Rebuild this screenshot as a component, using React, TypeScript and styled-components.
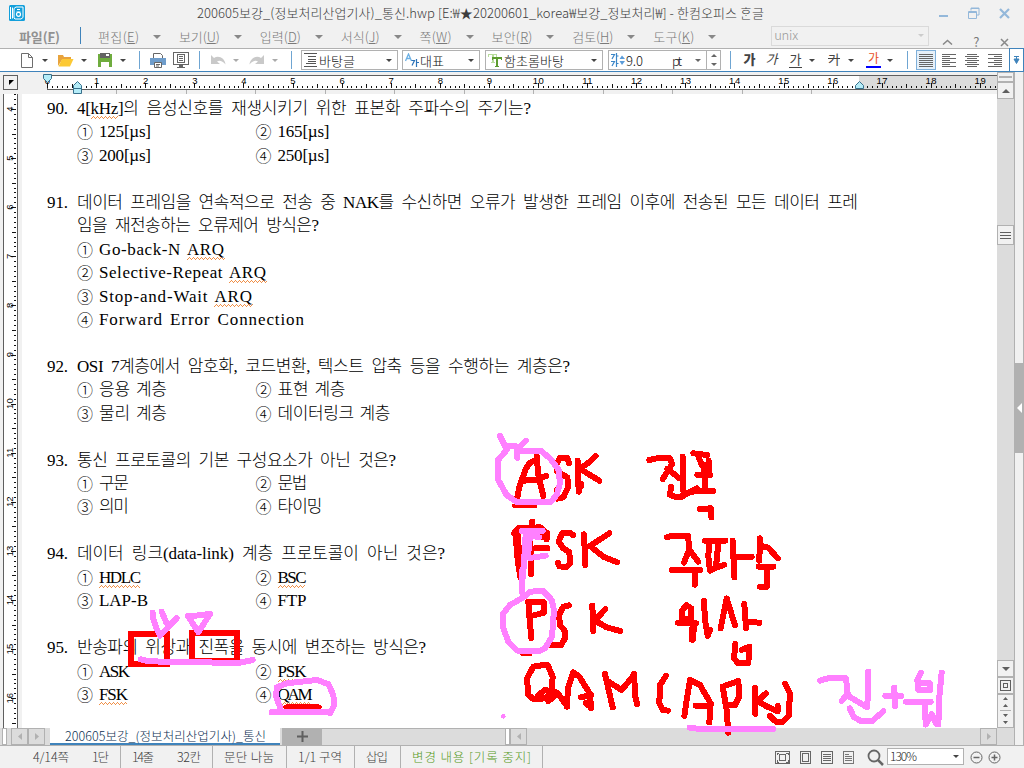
import React, { useLayoutEffect, useRef, useState } from "react";
import styled, { createGlobalStyle, css } from "styled-components";

const DARK = "#5f5f5f";
const LINE = "#b1b1b1";
const TRACK = "#dcdcdc";
const PANEL = "#f1f1f1";
const BLUE = "#3f83bb";
const RED = "#ff0000";
const PINK = "#ff80ff";

const UI_FONT = `"Noto Sans CJK KR", "Liberation Sans", sans-serif`;
const DOC_FONT = `"Liberation Serif", "Noto Sans CJK KR", serif`;

const GlobalStyle = createGlobalStyle`
  * { box-sizing: border-box; }
  body { margin: 0; background: ${PANEL}; overflow: hidden; }
  svg { display: block; flex: none; }
`;

const Window = styled.div`
  position: relative;
  display: flex;
  flex-direction: column;
  width: 1024px;
  height: 768px;
  overflow: hidden;
  background: ${PANEL};
  font-family: ${UI_FONT};
  font-weight: 300;
  font-size: 13px;
  color: #3c3c3c;
`;

const FitBox = styled.span<{ $w: number }>`
  display: block;
  flex: none;
  width: ${(p) => p.$w}px;
  white-space: pre;
`;

/* Tracks its text out or in so that it takes exactly the given width. */
function Fit({ w, children }: { w: number; children: React.ReactNode }) {
  const ref = useRef<HTMLSpanElement>(null);
  const [spacing, setSpacing] = useState(0);
  useLayoutEffect(() => {
    const el = ref.current;
    if (!el) return;
    const count = Math.max(1, (el.textContent || "").length - 1);
    setSpacing((w - el.getBoundingClientRect().width) / count);
  }, [w]);
  return (
    <FitBox $w={w}>
      <span ref={ref} style={{ letterSpacing: spacing }}>{children}</span>
    </FitBox>
  );
}

/* ---------- title and menu ---------- */

const TitleBar = styled.header`
  display: flex;
  align-items: center;
  height: 26px;
  padding-left: 9px;
  line-height: 26px;
  font-size: 13px;
`;

const TitleText = styled.div`
  margin-left: 172px;
  margin-right: 175px;
`;

const WindowButtons = styled.div`
  display: flex;
  align-items: center;
  gap: 19px;
`;

const MenuBar = styled.nav`
  display: flex;
  height: 22px;
  padding-left: 19px;
  line-height: 22px;
  color: #7a7a7a;
`;

const MenuItem = styled.div<{ $strong?: boolean }>`
  display: flex;
  align-items: center;
  margin-right: 17.9px;
  ${(p) => p.$strong && css`font-weight: 700; color: #919191; margin-right: 18px;`}
`;

const MenuDivider = styled.div`
  width: 1px;
  height: 17px;
  margin: 1px 17px 0 2px;
  background: ${BLUE};
`;

const Caret = styled.i<{ $size?: number; $color?: string; $ml?: number; $up?: boolean }>`
  flex: none;
  width: 0;
  height: 0;
  margin-left: ${(p) => p.$ml ?? 0}px;
  border: solid transparent;
  border-width: 0 ${(p) => p.$size ?? 3}px;
  ${(p) => (p.$up ? "border-bottom" : "border-top")}: ${(p) => p.$size ?? 3}px solid ${(p) => p.$color ?? "#444"};
`;

const SearchBox = styled.div`
  display: flex;
  align-items: center;
  justify-content: space-between;
  width: 158px;
  height: 20px;
  margin-left: 37px;
  padding: 0 4px 2px 2px;
  border: 1px solid #dadada;
  color: #999;
`;

const MenuTools = styled.div`
  display: flex;
  align-items: center;
  gap: 20px;
  margin: 9px 0 0 13px;
  height: 14px;
`;

/* ---------- toolbar ---------- */

const Toolbar = styled.div`
  display: flex;
  align-items: center;
  height: 24px;
  border-top: 1px solid ${LINE};
  border-bottom: 1px solid ${BLUE};
  background: #fff;
`;

const Item = styled.div<{ $ml: number; $w: number }>`
  flex: none;
  width: ${(p) => p.$w}px;
  margin-left: ${(p) => p.$ml}px;
`;

const Divider = styled.div<{ $ml: number }>`
  flex: none;
  width: 1px;
  height: 18px;
  margin-left: ${(p) => p.$ml}px;
  background: #6fa5d2;
`;

const Combo = styled.div<{ $ml: number; $w: number }>`
  display: flex;
  flex: none;
  align-items: center;
  width: ${(p) => p.$w}px;
  height: 20px;
  margin-left: ${(p) => p.$ml}px;
  padding: 0 5px 0 2px;
  border: 1px solid ${LINE};
  background: #fff;
  color: #111;
  font-size: 13px;
  line-height: 17px;
`;

const Grow = styled.div`
  flex: 1;
`;

const Spinner = styled.div`
  display: flex;
  flex: none;
  flex-direction: column;
  align-items: center;
  justify-content: center;
  gap: 6px;
  width: 15px;
  height: 20px;
  margin-left: -1px;
  border: 1px solid ${LINE};
`;

const Glyph = styled.div<{ $ml: number; $w: number; $kind?: "bold" | "italic" | "under" | "strike" | "color" }>`
  flex: none;
  width: ${(p) => p.$w}px;
  height: 16px;
  margin-left: ${(p) => p.$ml}px;
  text-align: center;
  font-size: 13px;
  line-height: 14px;
  font-weight: 400;
  color: #444;
  ${(p) => p.$kind === "bold" && css`font-weight: 900;`}
  ${(p) => p.$kind === "italic" && css`font-style: italic;`}
  ${(p) => p.$kind === "under" && css`border-bottom: 1px solid #444;`}
  ${(p) => p.$kind === "strike" && css`text-decoration: line-through;`}
  ${(p) => p.$kind === "color" && css`color: #e8501e; font-size: 12px; line-height: 11px; border-bottom: 2px solid #0000ff;`}
`;

const AlignButton = styled.div<{ $ml: number; $w: number; $on?: boolean }>`
  display: flex;
  flex: none;
  align-items: center;
  justify-content: center;
  width: ${(p) => p.$w}px;
  height: 20px;
  margin-left: ${(p) => p.$ml}px;
  ${(p) => p.$on && css`border: 1px solid #7fb0da; background: #e6f0f9;`}
`;

const MoreButton = styled.div`
  display: flex;
  align-items: center;
  justify-content: center;
  width: 15px;
  height: 24px;
  margin-left: 7px;
  border: 1px solid ${BLUE};
  background: #fff;
`;

/* ---------- body ---------- */

const Body = styled.div`
  display: flex;
  height: 674px;
  border-bottom: 1px solid ${LINE};
`;

const Work = styled.div`
  display: flex;
  flex-direction: column;
  width: 1014px;
`;

const Upper = styled.div`
  display: flex;
  height: 656px;
`;

const Editor = styled.div`
  display: flex;
  flex-direction: column;
  width: 997px;
`;

const RulerRow = styled.div`
  display: flex;
  height: 22px;
  padding-left: 3px;
`;

const RulerCorner = styled.div`
  display: flex;
  align-items: flex-end;
  justify-content: flex-end;
  width: 15px;
  height: 15px;
  margin-top: 3px;
  padding: 0 3px 4px 0;
  border: 1px solid ${DARK};
`;

const PageRow = styled.div`
  display: flex;
  height: 634px;
`;

const Page = styled.main`
  flex: 1;
  padding: 3px 0 0 25px;
  background: #fff;
  color: #000;
  font-family: ${DOC_FONT};
  font-size: 17px;
  font-weight: 300;
  line-height: 23.44px;
`;

const Line = styled.div`
  display: flex;
  height: 23.44px;
  overflow: visible;
`;

const Num = styled.div`
  width: 30px;
  word-spacing: 0;
`;

const Question = styled.div`
  word-spacing: 4px;
`;

const Option = styled.div<{ $first?: boolean }>`
  display: flex;
  width: 178.5px;
  margin-left: ${(p) => (p.$first ? 30 : 0)}px;
  white-space: nowrap;
  word-spacing: 2px;
`;

const Mark = styled.span`
  flex: none;
  width: 22px;
  font-family: "Noto Sans CJK KR", sans-serif;
  font-size: 16px;
`;

const Spell = styled.span`
  padding-bottom: 1px;
  background:
    repeating-linear-gradient(90deg, #f09048 0 1px, transparent 1px 4px) 0 100% / 100% 1px no-repeat,
    repeating-linear-gradient(90deg, transparent 0 1px, #f09048 1px 2px, transparent 2px 3px, #f09048 3px 4px) 0 calc(100% - 1px) / 100% 1px no-repeat,
    repeating-linear-gradient(90deg, transparent 0 2px, #f09048 2px 3px, transparent 3px 4px) 0 calc(100% - 2px) / 100% 1px no-repeat;
`;

/* ---------- scrollbars ---------- */

const ScrollColumn = styled.div`
  display: flex;
  flex-direction: column;
  width: 17px;
  background: ${TRACK};
`;

const ScrollButton = styled.div<{ $h: number; $w?: number; $mt?: number; $flat?: boolean }>`
  display: flex;
  flex: none;
  flex-direction: column;
  align-items: center;
  justify-content: center;
  width: ${(p) => p.$w ?? 17}px;
  height: ${(p) => p.$h}px;
  margin-top: ${(p) => p.$mt ?? 0}px;
  border: 1px solid ${LINE};
  background: ${(p) => (p.$flat ? TRACK : PANEL)};
`;

const Side = styled.aside`
  width: 10px;
  padding-top: 291px;
  border-left: 1px solid ${LINE};
  border-right: 1px solid ${LINE};
`;

const SideHandle = styled.div`
  display: flex;
  align-items: center;
  justify-content: center;
  width: 10px;
  height: 90px;
  margin-left: -1px;
  background: ${LINE};
`;

const TabBar = styled.div`
  display: flex;
  height: 17px;
  background: ${TRACK};
`;

const Grip = styled.div<{ $ml: number }>`
  flex: none;
  width: 5px;
  margin-left: ${(p) => p.$ml}px;
  border: 1px solid ${LINE};
  background: #fff;
`;

const Tab = styled.div`
  display: flex;
  align-items: center;
  width: 230px;
  height: 17px;
  margin-left: 5px;
  padding-left: 15px;
  border-bottom: 2px solid ${BLUE};
  background: #fff;
  color: #0c2f52;
  font-size: 12.5px;
  line-height: 14px;
`;

const AddTab = styled.div`
  display: flex;
  align-items: center;
  justify-content: center;
  width: 40px;
  margin-left: 2px;
  background: ${LINE};
`;

const TabTrack = styled.div`
  width: 183px;
  border-top: 1px solid ${LINE};
`;

/* ---------- status bar ---------- */

const StatusBar = styled.footer`
  display: flex;
  align-items: center;
  height: 22px;
  padding-left: 33px;
  line-height: 22px;
  font-size: 12.5px;
`;

const Status = styled.div<{ $mr: number; $rule?: boolean; $green?: boolean }>`
  height: 22px;
  padding-right: ${(p) => p.$mr}px;
  ${(p) => p.$rule && css`border-right: 1px solid ${LINE}; margin-right: 11px;`}
  ${(p) => p.$green && css`color: #589a1e;`}
`;

const ViewIcons = styled.div`
  display: flex;
  align-items: center;
  gap: 10px;
  margin-left: 221px;
`;

const ZoomBox = styled.div`
  display: flex;
  align-items: center;
  justify-content: space-between;
  width: 77px;
  height: 17px;
  margin: 0 6px 1px 3px;
  padding: 0 4px 1px 2px;
  border: 1px solid ${LINE};
  background: #fff;
  color: #222;
  font-size: 12px;
  line-height: 14px;
`;

const Ink = styled.svg`
  position: absolute;
  inset: 0;
  pointer-events: none;
`;

/* ---------- rulers ---------- */

const UNIT = 49.1;

function HorizontalRuler() {
  const ticks = Array.from({ length: 194 }, (_, i) => i);
  const nums = Array.from({ length: 20 }, (_, i) => i);
  const marks = Array.from({ length: 13 }, (_, i) => 116.5 + i * 69.5);
  return (
    <svg width="979" height="22" viewBox="18 72 979 22" shapeRendering="crispEdges">
      <rect x="47" y="75" width="812" height="14" fill="#fff" />
      <rect x="859" y="75" width="138" height="14" fill={TRACK} />
      <path d="M47 75.5H997M47 89.5H997M47.5 75V90" stroke={DARK} fill="none" />
      {ticks.map((i) => {
        const x = Math.round(47 + (i * UNIT) / 10);
        const h = i % 10 === 0 ? 5 : i % 5 === 0 ? 4 : 2;
        return <rect key={i} x={x} y={88 - h} width="1" height={h} fill="#111" />;
      })}
      {nums.map((n) => (
        <text key={n} x={47.5 + n * UNIT} y="84" textAnchor="middle" fontFamily="Liberation Sans, sans-serif" fontSize="9.5" letterSpacing={n > 9 ? 0.5 : 0} fill="#000">{n}</text>
      ))}
      {marks.filter((m) => m < 859).map((m) => <path key={m} d={`M${m} 90V94`} stroke={LINE} />)}
      <path d="M43.5 74.5h8v4l-4 4-4-4z" fill="#b4ecf8" stroke="#38708c" shapeRendering="auto" />
      <path d="M77.500 81.500l4 4v3h-8v-3zM73.500 88.500h8v5h-8z" fill="#b4ecf8" stroke="#38708c" shapeRendering="auto" />
      <path d="M859.500 81.500l4 4v3h-8v-3z" fill="#b4ecf8" stroke="#38708c" shapeRendering="auto" />
    </svg>
  );
}

function VerticalRuler() {
  const nums = Array.from({ length: 13 }, (_, i) => i + 4);
  const ticks = Array.from({ length: 129 }, (_, i) => i + 37);
  const at = (v: number) => 109 + (v - 4) * UNIT;
  return (
    <svg width="22" height="634" viewBox="0 94 22 634" shapeRendering="crispEdges">
      <rect x="3" y="94" width="15" height="634" fill="#fff" />
      <path d="M3.500 94V728M17.500 94V728" stroke={DARK} />
      {ticks.map((i) => {
        const w = i % 10 === 0 ? 5 : i % 5 === 0 ? 4 : 2;
        return <rect key={i} x={16 - w} y={Math.round(at(i / 10))} width={w} height="1" fill="#111" />;
      })}
      {nums.map((n) => (
        <text key={n} transform={`translate(13 ${at(n)}) rotate(-90)`} textAnchor="middle" fontFamily="Liberation Sans, sans-serif" fontSize="9.5" fill="#000">{n}</text>
      ))}
    </svg>
  );
}

/* ---------- icons ---------- */

const Logo = () => (
  <svg width="16" height="16" viewBox="0 0 16 16">
    <rect width="16" height="16" rx="1.500" fill="#129fdb" />
    <path d="M1.500 2v12M3.500 2.500v11" stroke="#fff" />
    <path d="M5 3.500L7 2h7v10.500L12 14H6l-1-1z" fill="none" stroke="#fff" />
    <path d="M8 4.500h3M7.500 7h4" stroke="#fff" />
    <circle cx="9.500" cy="9.300" r="2" fill="none" stroke="#fff" strokeWidth="1.200" />
  </svg>
);

const NewIcon = () => (
  <svg width="12" height="15" viewBox="0 0 12 15">
    <path d="M.5.500h7l4 4v10h-11zM7.500.500v4h4" fill="#fff" stroke="#6e6e6e" />
  </svg>
);

const FolderIcon = () => (
  <svg width="17" height="13" viewBox="0 0 17 13">
    <path d="M1 12V1h5l1 2h7v3H5z" fill="#e8a33c" />
    <path d="M5 5h11.500L13 12.500H1.500z" fill="#fcc934" />
  </svg>
);

const SaveIcon = () => (
  <svg width="14" height="15" viewBox="0 0 14 15" shapeRendering="crispEdges">
    <path d="M0 1h14v13H0z" fill="#6fac3e" />
    <path d="M2 0h10v5H2z" fill="#646464" />
    <path d="M8 1h3v2H8zM3 9h8v5H3z" fill="#fff" />
  </svg>
);

const PrintIcon = () => (
  <svg width="16" height="15" viewBox="0 0 16 15">
    <path d="M3.500 5V.500h7l2 2V5" fill="#fff" stroke="#666" />
    <path d="M0 5h16v7H0z" fill="#6f9dcb" />
    <path d="M4.500 9.500h7v5h-7zM6 11.500h4M6 13h3" fill="#fff" stroke="#666" />
  </svg>
);

const PreviewIcon = () => (
  <svg width="16" height="16" viewBox="0 0 16 16" shapeRendering="crispEdges">
    <path d="M.5.500h15v12H.5z" fill="#fff" stroke="#666" />
    <path d="M4.500 2.500h7v8h-7zM6 4.500h4M6 6.500h4M6 8.500h4" fill="none" stroke="#666" />
    <path d="M6 13h4v3H6zM4 15h8v1H4z" fill="#666" />
  </svg>
);

const UndoIcon = ({ flip }: { flip?: boolean }) => (
  <svg width="15" height="11" viewBox="0 0 15 11">
    <g transform={flip ? "translate(15 0) scale(-1 1)" : undefined}>
      <path d="M0 0v9h9L6 6.500C8.500 5 11.500 6 14.500 9.500 14 3 7.500 0 3 3z" fill="#c9c9c9" />
    </g>
  </svg>
);

const StyleIcon = () => (
  <svg width="14" height="14" viewBox="0 0 14 14" shapeRendering="crispEdges">
    <path d="M0 .500h13M4 3.500h8M4 6.500h8M4 8.500h8M2 10.500h10M0 13.500h13" stroke="#555" />
  </svg>
);

const SizeIcon = () => (
  <svg width="14" height="14" viewBox="0 0 14 14">
    <path d="M0 1.500h3.500L1 6M5.500 0v7M5.500 3h2M0 8.500h3.500L1 13M5.500 7v7M5.500 10.500h2" fill="none" stroke="#3a86c8" strokeWidth="1.200" />
    <path d="M11 2.500l3 3.500H8.500zM11 12l3-4H8.500z" fill="#5a9bd8" />
  </svg>
);

const LangIcon = () => (
  <svg width="14" height="14" viewBox="0 0 14 14">
    <path d="M.5 8L3.500 1 6.500 8M1.500 5.500h4" fill="none" stroke="#6cb0e4" strokeWidth="1.300" />
    <path d="M6.500 7.500h3L7 12.500M11.500 6v8M11.500 9.500H14" fill="none" stroke="#2b72b8" strokeWidth="1.200" />
  </svg>
);

const FontIcon = () => (
  <svg width="14" height="14" viewBox="0 0 14 14" shapeRendering="crispEdges">
    <path d="M0 1h9v3H8V2H6v7h1v1H3V9h1V2H1v2H0z" fill="#b8dc9c" />
    <path d="M4 4h10v3h-1V6h-3v7h1v1H7v-1h1V6H5v1H4z" fill="#5d9c30" />
  </svg>
);

const alignPaths = {
  justify: "M0 .500h14M0 2.500h14M0 4.500h14M0 6.500h14M0 8.500h14M0 10.500h14M0 12.500h14",
  left: "M0 .500h14M0 2.500h8M0 4.500h14M0 6.500h8M0 8.500h14M0 10.500h8M0 12.500h14",
  center: "M2 .500h10M0 2.500h14M2 4.500h10M0 6.500h14M2 8.500h10M0 10.500h14M2 12.500h10",
  right: "M0 .500h14M6 2.500h8M0 4.500h14M6 6.500h8M0 8.500h14M6 10.500h8M0 12.500h14",
};

const AlignIcon = ({ kind }: { kind: keyof typeof alignPaths }) => (
  <svg width="14" height="13" viewBox="0 0 14 13" shapeRendering="crispEdges">
    <path d={alignPaths[kind]} stroke="#666" />
  </svg>
);

const Tri = ({ right, color = LINE, w = 4, h = 7 }: { right?: boolean; color?: string; w?: number; h?: number }) => (
  <svg width={w} height={h} viewBox="0 0 4 7" preserveAspectRatio="none">
    <path d={right ? "M0 0l4 3.500L0 7z" : "M4 0L0 3.500 4 7z"} fill={color} />
  </svg>
);

/* ---------- document ---------- */

type Opt = [mark: string, width: number, text: React.ReactNode];

function Options({ a, b }: { a: Opt; b?: Opt }) {
  return (
    <Line>
      <Option $first><Mark>{a[0]}</Mark><Fit w={a[1]}>{a[2]}</Fit></Option>
      {b && <Option><Mark>{b[0]}</Mark><Fit w={b[1]}>{b[2]}</Fit></Option>}
    </Line>
  );
}

function Ask({ n, w, children }: { n?: string; w: number; children: React.ReactNode }) {
  return (
    <Line>
      <Num>{n && <Fit w={21}>{n}</Fit>}</Num>
      <Question><Fit w={w}>{children}</Fit></Question>
    </Line>
  );
}

function DocumentText() {
  return (
    <Page>
      <Ask n="90." w={454}>4[<Spell>kHz</Spell>]의 음성신호를 재생시키기 위한 표본화 주파수의 주기는?</Ask>
      <Options a={["①", 52, "125[µs]"]} b={["②", 52, "165[µs]"]} />
      <Options a={["③", 52, "200[µs]"]} b={["④", 52, "250[µs]"]} />
      <Line />
      <Ask n="91." w={781}>데이터 프레임을 연속적으로 전송 중 NAK를 수신하면 오류가 발생한 프레임 이후에 전송된 모든 데이터 프레</Ask>
      <Ask w={242}>임을 재전송하는 오류제어 방식은?</Ask>
      <Options a={["①", 125, <>Go-back-N <Spell>ARQ</Spell></>]} />
      <Options a={["②", 167, <>Selective-Repeat <Spell>ARQ</Spell></>]} />
      <Options a={["③", 153, <>Stop-and-Wait <Spell>ARQ</Spell></>]} />
      <Options a={["④", 205, "Forward Error Connection"]} />
      <Line />
      <Ask n="92." w={493}>OSI 7계층에서 암호화, 코드변환, 텍스트 압축 등을 수행하는 계층은?</Ask>
      <Options a={["①", 68, "응용 계층"]} b={["②", 68, "표현 계층"]} />
      <Options a={["③", 68, "물리 계층"]} b={["④", 113, "데이터링크 계층"]} />
      <Line />
      <Ask n="93." w={319}>통신 프로토콜의 기본 구성요소가 아닌 것은?</Ask>
      <Options a={["①", 30, "구문"]} b={["②", 30, "문법"]} />
      <Options a={["③", 30, "의미"]} b={["④", 45, "타이밍"]} />
      <Line />
      <Ask n="94." w={368}>데이터 링크(data-link) 계층 프로토콜이 아닌 것은?</Ask>
      <Options a={["①", 42, <Spell>HDLC</Spell>]} b={["②", 29, <Spell>BSC</Spell>]} />
      <Options a={["③", 49, "LAP-B"]} b={["④", 29, "FTP"]} />
      <Line />
      <Ask n="95." w={349}>반송파의 위상과 진폭을 동시에 변조하는 방식은?</Ask>
      <Options a={["①", 31, "ASK"]} b={["②", 29, <Spell>PSK</Spell>]} />
      <Options a={["③", 29, <Spell>FSK</Spell>]} b={["④", 35, <Spell>QAM</Spell>]} />
    </Page>
  );
}

/* Pen strokes made over the page; each group is drawn on a grid of a third of a pixel. */
function InkLayer() {
  const pen = { fill: "none", strokeLinecap: "round", strokeLinejoin: "round", strokeWidth: 18 } as const;
  const third = "scale(.33333)";
  return (
    <Ink width="1024" height="768" viewBox="0 0 1024 768" shapeRendering="crispEdges">
      <g transform={`translate(480 420) ${third}`} {...pen}>
        <g stroke={RED}>
          <path d="M112 232L118 200 138 145 150 128 172 118M170 108L175 165 190 228M130 182L165 180 198 168" />
          <path d="M102 258H166" strokeWidth="12" />
          <path d="M267 130L262 113 240 113 228 135 232 155 262 172 265 200 250 232 230 236 230 210" />
          <path d="M293 122L296 215M303 192V198M347 108L330 125 300 146 325 162 358 182" />
          <path d="M508 120L530 115H570L576 132 548 178M562 146L598 175M608 110L610 212M573 200L570 225 590 232 605 230 650 205" />
          <path d="M640 100L682 105M655 108L665 135M686 122V165M652 165H690M672 135L675 210M610 222L650 212 700 213M660 267L692 265 694 292" />
          <path d="M157 305V325M102 340L115 325 180 322 202 340 200 358M165 385H202M153 390V463M160 345L190 352" />
          <path d="M110 345L116 420 124 470M145 340L150 400" strokeWidth="24" />
          <path d="M280 346L270 338 246 340 236 365 250 385 268 396 270 430 260 441 238 439 234 428" />
          <path d="M312 343L316 435M388 340L330 378 370 410 412 427" />
          <path d="M560 352L575 347H624L628 388 612 428M630 392L655 425M576 450H660M645 455V494" />
          <path d="M675 362H736M687 370L685 410 690 452M715 370L708 440M690 450L733 434M758 362L763 472M765 410H815" />
          <path d="M840 355L838 422M845 378L865 383 893 415M836 440H880M861 445V500H840" />
        </g>
        <g stroke={PINK}>
          <path d="M60 48L75 78 120 80 138 62M112 80V114M112 92H182L210 115 236 150 240 190 230 225 212 246H110L80 225 55 180 54 120 80 90" />
          <path d="M128 475L132 430 137 345M150 414L197 407M125 333H188M145 345L178 352" />
          <path d="M146 350L140 405" strokeWidth="26" />
        </g>
      </g>
      <g transform={`translate(480 570) ${third}`} {...pen}>
        <g stroke={RED}>
          <path d="M145 95L149 150 154 204M145 97L192 97 192 128 162 136" />
          <path d="M125 254H152" strokeWidth="8" />
          <path d="M267 106L250 110 237 135 240 165 256 185 255 205 243 226 215 226" />
          <path d="M337 107L340 183M376 117L345 152 380 172 421 183" />
          <path d="M620 106L607 120 607 145 632 148 634 115zM594 158L648 160M672 92L675 150 683 198 690 180" />
          <path d="M640 165L637 207" strokeWidth="22" />
          <path d="M722 175L740 85 765 166M793 102L798 175M800 155L838 158M766 222L762 265 775 280 805 279 808 230 785 240" />
          <path d="M190 285L160 290 141 325 145 375 160 387 200 385 216 355 218 320 203 285zM175 375L195 360 232 368 262 410M205 394L222 378" />
          <path d="M260 410L265 350 280 307 298 320 330 372 333 415M302 382L334 375M317 400L333 412M375 312L398 412M385 335L425 360 462 315M462 312L466 380 471 402" />
          <path d="M558 317L540 345 538 400 548 420 564 422" />
          <path d="M613 438L620 390 630 330 660 345 692 400 688 457M647 407H690M728 350L740 420 745 488M728 350L775 333 778 380 765 405 748 405" />
          <path d="M825 353L826 432M858 370L832 394 862 410 893 424V408M870 438L888 455 908 456 926 438 930 370 915 341" />
        </g>
        <g stroke={PINK}>
          <path d="M127 0V68M190 63L215 90 222 120 216 200 195 235 180 242H112L85 215 68 170 70 130 90 105 130 82 150 65z" />
          <path d="M629 473L660 477H880" />
          <path d="M70 439h.1" strokeWidth="14" />
        </g>
      </g>
      <g transform={`translate(0 600) ${third}`} {...pen}>
        <path d="M394 102H501V191H394zM576 98H711V183H576z" stroke={RED} strokeLinejoin="miter" />
        <path d="M857 321H958" stroke={RED} strokeWidth="15" />
        <path stroke={PINK} d="M422 178L445 184 715 189 758 180M458 50L468 82 480 107 530 55M458 38V50M485 35L500 70M564 48L595 97 630 42M564 50L628 42" />
        <path stroke={PINK} d="M840 322L829 290 830 262 860 250 950 240 985 252 1000 285 1003 315 990 339M815 337H990" />
      </g>
      <g transform={`translate(780 600) ${third}`} stroke={PINK} {...pen}>
        <path d="M120 242L150 233 198 235 203 280 185 303M205 288L262 322 265 215M209 325L222 352 245 364H275L310 334M316 288H364M343 263L345 318" />
        <path d="M423 218L412 240 415 270 450 270 450 250 415 250M378 305H452M485 218L478 290 475 373M435 305L437 374 455 343 470 373" />
      </g>
    </Ink>
  );
}

const menus: [string, string, number][] = [
  ["편집", "E", 41], ["보기", "U", 41], ["입력", "D", 41], ["서식", "J", 39],
  ["쪽", "W", 32], ["보안", "R", 41], ["검토", "H", 41], ["도구", "K", 41],
];

export default function App() {
  return (
    <Window>
      <GlobalStyle />
      <TitleBar>
        <Logo />
        <TitleText><Fit w={567}>200605보강_(정보처리산업기사)_통신.hwp [E:₩★20200601_korea₩보강_정보처리₩] - 한컴오피스 ᄒᆞᆫ글</Fit></TitleText>
        <WindowButtons>
          <svg width="10" height="12" viewBox="0 0 10 12"><path d="M0 9h9" stroke="#94b8da" strokeWidth="2" /></svg>
          <svg width="12" height="12" viewBox="0 0 12 12"><path d="M3 3.500V1h8v7H8M.5 4.500h8v7h-8zM.5 5.500h8M3 1.500h8" fill="none" stroke="#94b8da" /></svg>
          <svg width="11" height="11" viewBox="0 0 11 11"><path d="M1 1l9 9M10 1l-9 9" stroke="#94b8da" strokeWidth="2.200" /></svg>
        </WindowButtons>
      </TitleBar>
      <MenuBar>
        <MenuItem $strong><Fit w={41}>파일(<u>F</u>)</Fit></MenuItem>
        <MenuDivider />
        {menus.map(([name, key, w]) => (
          <MenuItem key={key}>
            <Fit w={w}>{name}(<u>{key}</u>)</Fit>
            <Caret $size={4} $ml={14} $color="#888" />
          </MenuItem>
        ))}
        <SearchBox><Fit w={24}>unix</Fit><Caret $color="#ccc" /></SearchBox>
        <MenuTools>
          <svg width="11" height="6" viewBox="0 0 11 6"><path d="M1 5.500l4.500-4 4.500 4" fill="none" stroke="#888" strokeWidth="1.500" /></svg>
          <Fit w={7}><b>?</b></Fit>
          <svg width="9" height="9" viewBox="0 0 9 9"><path d="M1 1l7 7M8 1L1 8" stroke="#888" strokeWidth="1.500" /></svg>
        </MenuTools>
      </MenuBar>

      <Toolbar>
        <Item $ml={21} $w={12}><NewIcon /></Item>
        <Caret $ml={9} />
        <Item $ml={9} $w={17}><FolderIcon /></Item>
        <Caret $ml={7} />
        <Item $ml={11} $w={14}><SaveIcon /></Item>
        <Caret $ml={8} />
        <Divider $ml={13} />
        <Item $ml={10} $w={16}><PrintIcon /></Item>
        <Item $ml={7} $w={16}><PreviewIcon /></Item>
        <Divider $ml={10} />
        <Item $ml={11} $w={15}><UndoIcon /></Item>
        <Caret $ml={7} $color="#aaa" />
        <Item $ml={10} $w={15}><UndoIcon flip /></Item>
        <Caret $ml={8} $color="#aaa" />
        <Divider $ml={13} />
        <Combo $ml={9} $w={97}><StyleIcon /><Item $ml={1} $w={37}><Fit w={36}>바탕글</Fit></Item><Grow /><Caret /></Combo>
        <Combo $ml={4} $w={78}><LangIcon /><Item $ml={1} $w={26}><Fit w={24}>대표</Fit></Item><Grow /><Caret /></Combo>
        <Combo $ml={5} $w={118}><FontIcon /><Item $ml={2} $w={62}><Fit w={60}>함초롬바탕</Fit></Item><Grow /><Caret /></Combo>
        <Combo $ml={5} $w={99}><SizeIcon /><Item $ml={1} $w={20}><Fit w={17}>9.0</Fit></Item><Item $ml={26} $w={11}><Fit w={10}>pt</Fit></Item><Grow /><Caret $color="#666" /></Combo>
        <Spinner><Caret $up $color="#666" /><Caret $color="#666" /></Spinner>
        <Divider $ml={9} />
        <Glyph $ml={12} $w={13} $kind="bold">가</Glyph>
        <Glyph $ml={9} $w={13} $kind="italic">가</Glyph>
        <Glyph $ml={11} $w={13} $kind="under">가</Glyph>
        <Caret $ml={7} />
        <Glyph $ml={12} $w={14} $kind="strike">가</Glyph>
        <Caret $ml={7} />
        <Glyph $ml={12} $w={15} $kind="color">가</Glyph>
        <Caret $ml={6} />
        <Divider $ml={14} />
        <AlignButton $ml={8} $w={20} $on><AlignIcon kind="justify" /></AlignButton>
        <AlignButton $ml={6} $w={14}><AlignIcon kind="left" /></AlignButton>
        <AlignButton $ml={9} $w={14}><AlignIcon kind="center" /></AlignButton>
        <AlignButton $ml={9} $w={14}><AlignIcon kind="right" /></AlignButton>
        <MoreButton>
          <svg width="7" height="8" viewBox="0 0 7 8"><path d="M1 .500h5M3.500 0v4M1 3h5L3.500 7.500z" fill={BLUE} stroke={BLUE} /></svg>
        </MoreButton>
      </Toolbar>

      <Body>
        <Work>
          <Upper>
            <Editor>
              <RulerRow>
                <RulerCorner>
                  <svg width="5" height="5" viewBox="0 0 5 5"><path d="M0 0h5L0 5z" fill="#000" /></svg>
                </RulerCorner>
                <HorizontalRuler />
              </RulerRow>
              <PageRow>
                <VerticalRuler />
                <DocumentText />
              </PageRow>
            </Editor>
            <ScrollColumn>
              <ScrollButton $h={10}><svg width="13" height="2"><rect width="13" height="2" fill={LINE} /></svg></ScrollButton>
              <ScrollButton $h={17}><Caret $up $size={4} $color={DARK} /></ScrollButton>
              <ScrollButton $h={20} $mt={126}>
                <svg width="11" height="7" viewBox="0 0 11 7" shapeRendering="crispEdges"><path d="M0 .500h11M0 3.500h11M0 6.500h11" stroke={DARK} /></svg>
              </ScrollButton>
              <Grow />
              <ScrollButton $h={17}><Caret $size={4} $color={DARK} /></ScrollButton>
              <ScrollButton $h={17}>
                <svg width="11" height="11" viewBox="0 0 11 11" shapeRendering="crispEdges"><path d="M.5.500h10v10H.5zM3.500 3.500h4v4h-4z" fill="none" stroke={DARK} /></svg>
              </ScrollButton>
              <ScrollButton $h={34}>
                <svg width="11" height="28" viewBox="0 0 11 28">
                  <path d="M3 3l2.500-3L8 3zM3 10l2.500-3L8 10zM3 17l2.500 3L8 17zM3 24l2.500 3L8 24z" fill={DARK} />
                  <path d="M0 13.500h11" stroke={LINE} />
                </svg>
              </ScrollButton>
            </ScrollColumn>
          </Upper>
          <TabBar>
            <Grip $ml={2} />
            <Item $ml={4} $w={17}><ScrollButton $h={17} $flat><Tri /></ScrollButton></Item>
            <Item $ml={0} $w={17}><ScrollButton $h={17} $flat><Tri right /></ScrollButton></Item>
            <Tab><Fit w={201}>200605보강_(정보처리산업기사)_통신</Fit></Tab>
            <AddTab><svg width="11" height="11" viewBox="0 0 11 11"><path d="M5.500 0v11M0 5.500h11" stroke={DARK} strokeWidth="2" /></svg></AddTab>
            <TabTrack />
            <Grip $ml={0} />
            <ScrollButton $h={17} $flat><Tri /></ScrollButton>
            <Grow />
            <ScrollButton $h={17} $flat><Tri right /></ScrollButton>
            <Item $ml={0} $w={17} />
          </TabBar>
        </Work>
        <Side>
          <SideHandle><Tri color="#fff" w={5} h={10} /></SideHandle>
        </Side>
      </Body>

      <StatusBar>
        <Status $mr={23}><Fit w={36}>4/14쪽</Fit></Status>
        <Status $mr={11} $rule><Fit w={17}>1단</Fit></Status>
        <Status $mr={23}><Fit w={22}>14줄</Fit></Status>
        <Status $mr={11} $rule><Fit w={24}>32칸</Fit></Status>
        <Status $mr={12} $rule><Fit w={50}>문단 나눔</Fit></Status>
        <Status $mr={12} $rule><Fit w={44}>1/1 구역</Fit></Status>
        <Status $mr={12} $rule><Fit w={22}>삽입</Fit></Status>
        <Status $mr={11} $rule $green><Fit w={119}>변경 내용 [기록 중지]</Fit></Status>
        <ViewIcons>
          <svg width="15" height="13" viewBox="0 0 15 13" shapeRendering="crispEdges"><path d="M.5.500h14v12H.5zM4.500 3.500h6v6h-6zM2 4V2h2M11 2h2v2M2 9v2h2M11 11h2V9" fill="none" stroke="#666" /></svg>
          <svg width="11" height="13" viewBox="0 0 11 13" shapeRendering="crispEdges"><path d="M.5.500h10v12H.5zM2.500 2.500h6v8h-6z" fill="none" stroke="#666" /></svg>
          <svg width="12" height="13" viewBox="0 0 12 13" shapeRendering="crispEdges"><path d="M.5 13V.500h11V13M2 3.500h8M2 5.500h8M2 7.500h8M2 9.500h8M0 12.500h12" fill="none" stroke="#666" /></svg>
          <svg width="11" height="13" viewBox="0 0 11 13" shapeRendering="crispEdges"><path d="M.5.500h10v12H.5zM2 3.500h4M2 5.500h7M2 7.500h7M2 9.500h7" fill="none" stroke="#777" /></svg>
        </ViewIcons>
        <Item $ml={13} $w={17}>
          <svg width="17" height="17" viewBox="0 0 17 17"><circle cx="7" cy="7" r="5.500" fill="none" stroke="#666" strokeWidth="1.800" /><path d="M11 11l5 5" stroke="#666" strokeWidth="2.500" /></svg>
        </Item>
        <ZoomBox><Fit w={27}>130%</Fit><Caret /></ZoomBox>
        <svg width="13" height="13" viewBox="0 0 13 13"><circle cx="6.500" cy="6.500" r="5.500" fill="none" stroke="#666" /><path d="M3.500 6.500h6" stroke="#666" strokeWidth="1.500" /></svg>
        <Item $ml={5} $w={13}>
          <svg width="13" height="13" viewBox="0 0 13 13"><circle cx="6.500" cy="6.500" r="5.500" fill="none" stroke="#666" /><path d="M3.500 6.500h6M6.500 3.500v6" stroke="#666" strokeWidth="1.500" /></svg>
        </Item>
      </StatusBar>
      <InkLayer />
    </Window>
  );
}
